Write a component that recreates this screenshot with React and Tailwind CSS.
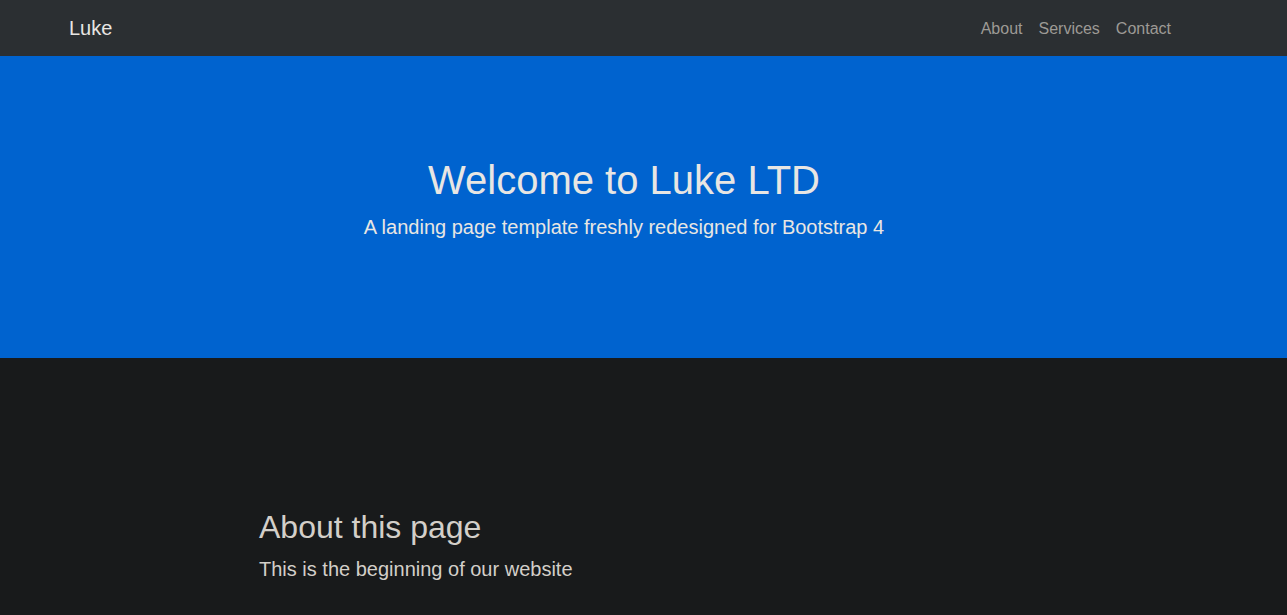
export default function App() {
  return (
    <div className="min-h-[615px] bg-[#181a1b] font-['Liberation_Sans',Arial,sans-serif]">
      <nav className="h-14 bg-[#2b2f32]">
        <div className="ml-[69px] flex h-full w-[1110px] items-center justify-between">
          <a className="text-[20px] leading-[30px] text-[#e8e6e3]">Luke</a>
          <ul className="flex pt-[2px]">
            <li className="px-2 text-base text-[#9d9a95]">About</li>
            <li className="px-2 text-base text-[#9d9a95]">Services</li>
            <li className="px-2 text-base text-[#9d9a95]">Contact</li>
          </ul>
        </div>
      </nav>
      <header className="h-[302px] bg-[#0063cf] pt-[100px]">
        <div className="w-[1248px] text-center text-[#e8e6e3]">
          <h1 className="mb-2 text-[40px] leading-[48px]">Welcome to Luke LTD</h1>
          <p className="text-[20px] leading-[30px]">A landing page template freshly redesigned for Bootstrap 4</p>
        </div>
      </header>
      <section className="pt-[150px]">
        <div className="ml-[259px] w-[730px] text-[#d3cfc9]">
          <h2 className="mb-2 text-[32px] leading-[38.4px]">About this page</h2>
          <p className="text-[20px] leading-[30px]">This is the beginning of our website</p>
        </div>
      </section>
    </div>
  );
}
